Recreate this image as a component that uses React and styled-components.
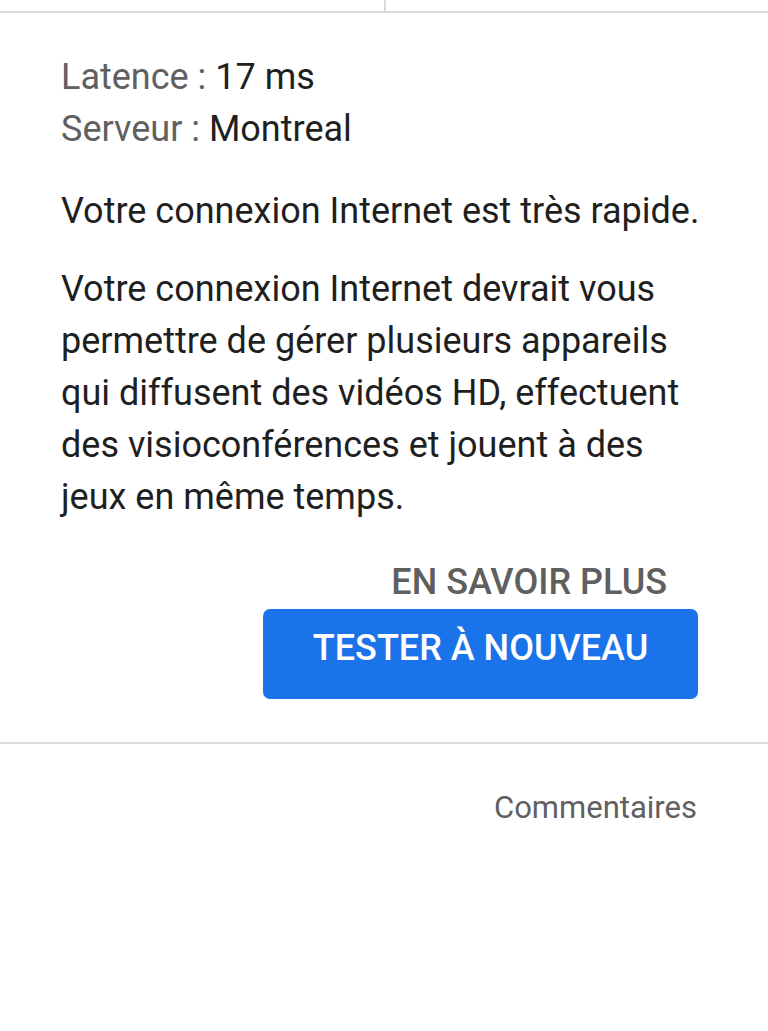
import React from 'react';
import styled, { createGlobalStyle } from 'styled-components';

const GlobalStyle = createGlobalStyle`
  html, body {
    margin: 0;
    padding: 0;
    background: #fff;
  }
  body {
    font-family: Roboto, "Liberation Sans", Arial, sans-serif;
    color: #1f1f1f;
  }
`;

const Page = styled.div`
  width: 768px;
  min-height: 1031px;
  background: #fff;
  display: flex;
  flex-direction: column;
`;

const TabStrip = styled.div`
  display: grid;
  grid-template-columns: 1fr 1fr;
  height: 11px;
  border-bottom: 2px solid #dadada;
`;

const TabCell = styled.div`
  border-left: ${({ divided }) => (divided ? '2px solid #dadada' : 'none')};
`;

const Card = styled.section`
  padding: 38px 58px 43px 61px;
  display: flex;
  flex-direction: column;
  border-bottom: 2px solid #dadada;
`;

const Stats = styled.div`
  display: flex;
  flex-direction: column;
  margin-bottom: 30px;
`;

const StatRow = styled.div`
  font-size: 36px;
  line-height: 52px;
  color: #1f1f1f;
`;

const StatLabel = styled.span`
  color: #606060;
`;

const Paragraph = styled.p`
  margin: 0 0 ${({ gap }) => gap}px;
  font-size: 36px;
  line-height: 52px;
  color: #1f1f1f;
`;

const Actions = styled.div`
  display: flex;
  flex-direction: column;
  align-items: flex-end;
  gap: 7px;
  padding-right: 12px;
`;

const TextButton = styled.button`
  border: none;
  background: none;
  padding: 0 31px 0 0;
  font-family: inherit;
  font-size: 36px;
  font-weight: 500;
  color: #5f5f5f;
  line-height: 40px;
`;

const PrimaryButton = styled.button`
  width: 435px;
  height: 90px;
  border: none;
  border-radius: 7px;
  background: #1a73e8;
  color: #fff;
  font-family: inherit;
  font-size: 36px;
  font-weight: 500;
  padding: 0 0 12px;
`;

const Footer = styled.div`
  display: flex;
  justify-content: flex-end;
  padding: 46px 71px 0 0;
`;

const FooterLink = styled.span`
  font-size: 31px;
  line-height: 36px;
  color: #606060;
`;

export default function App() {
  return (
    <>
      <GlobalStyle />
      <Page>
        <TabStrip>
          <TabCell />
          <TabCell divided />
        </TabStrip>
        <Card>
          <Stats>
            <StatRow>
              <StatLabel>Latence : </StatLabel>17 ms
            </StatRow>
            <StatRow>
              <StatLabel>Serveur : </StatLabel>Montreal
            </StatRow>
          </Stats>
          <Paragraph gap={26}>Votre connexion Internet est très rapide.</Paragraph>
          <Paragraph gap={39}>
            Votre connexion Internet devrait vous permettre de gérer plusieurs
            appareils qui diffusent des vidéos HD, effectuent des
            visioconférences et jouent à des jeux en même temps.
          </Paragraph>
          <Actions>
            <TextButton>EN SAVOIR PLUS</TextButton>
            <PrimaryButton>TESTER À NOUVEAU</PrimaryButton>
          </Actions>
        </Card>
        <Footer>
          <FooterLink>Commentaires</FooterLink>
        </Footer>
      </Page>
    </>
  );
}
